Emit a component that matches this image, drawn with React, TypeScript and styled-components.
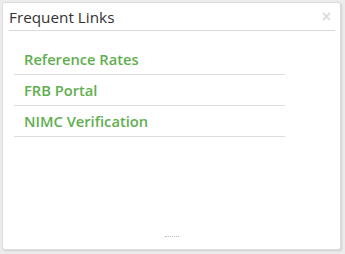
import React from "react";
import styled, { createGlobalStyle } from "styled-components";

const Global = createGlobalStyle`
  html, body { margin: 0; padding: 0; background: #ececec; }
  body { font-family: "Open Sans", "Liberation Sans", sans-serif; }
`;

const Page = styled.div`
  width: 345px;
  height: 254px;
  padding: 2px 4px 4px 2px;
  box-sizing: border-box;
`;

const Panel = styled.div`
  position: relative;
  height: 100%;
  background: #fff;
  border: 1px solid #dcdcdc;
  border-radius: 3px;
  box-shadow: 1px 1px 2px rgba(0, 0, 0, 0.12);
  box-sizing: border-box;
  display: flex;
  flex-direction: column;
`;

const Header = styled.div`
  display: flex;
  align-items: center;
  justify-content: space-between;
  margin: 0 5px 0 6px;
  height: 27px;
  border-bottom: 1px solid #dadada;
`;

const Title = styled.div`
  font-size: 15.3px;
  color: #333;
  line-height: 20px;
  padding-top: 0px;
`;

const Close = styled.span`
  font-family: "Liberation Sans", sans-serif;
  font-size: 16px;
  font-weight: bold;
  color: #ddd;
  line-height: 1;
  margin-right: 4px;
`;

const List = styled.ul`
  list-style: none;
  margin: 13px 0 0 11px;
  padding: 0;
  width: 271px;
`;

const Item = styled.li`
  border-bottom: 1px solid #dcdcdc;
  height: 30px;
  display: flex;
  align-items: center;
  padding-left: 10px;
`;

const Link = styled.a`
  font-size: 14.7px;
  font-weight: 600;
  color: #5fae4f;
  text-decoration: none;
`;

const Grip = styled.div`
  position: absolute;
  bottom: 11px;
  left: 50%;
  margin-left: -7px;
  width: 14px;
  height: 1px;
  border-top: 1px dotted #bbb;
`;

export default function App() {
  const links = ["Reference Rates", "FRB Portal", "NIMC Verification"];
  return (
    <Page>
      <Global />
      <Panel>
        <Header>
          <Title>Frequent Links</Title>
          <Close>×</Close>
        </Header>
        <List>
          {links.map((l) => (
            <Item key={l}>
              <Link href="#">{l}</Link>
            </Item>
          ))}
        </List>
        <Grip />
      </Panel>
    </Page>
  );
}
